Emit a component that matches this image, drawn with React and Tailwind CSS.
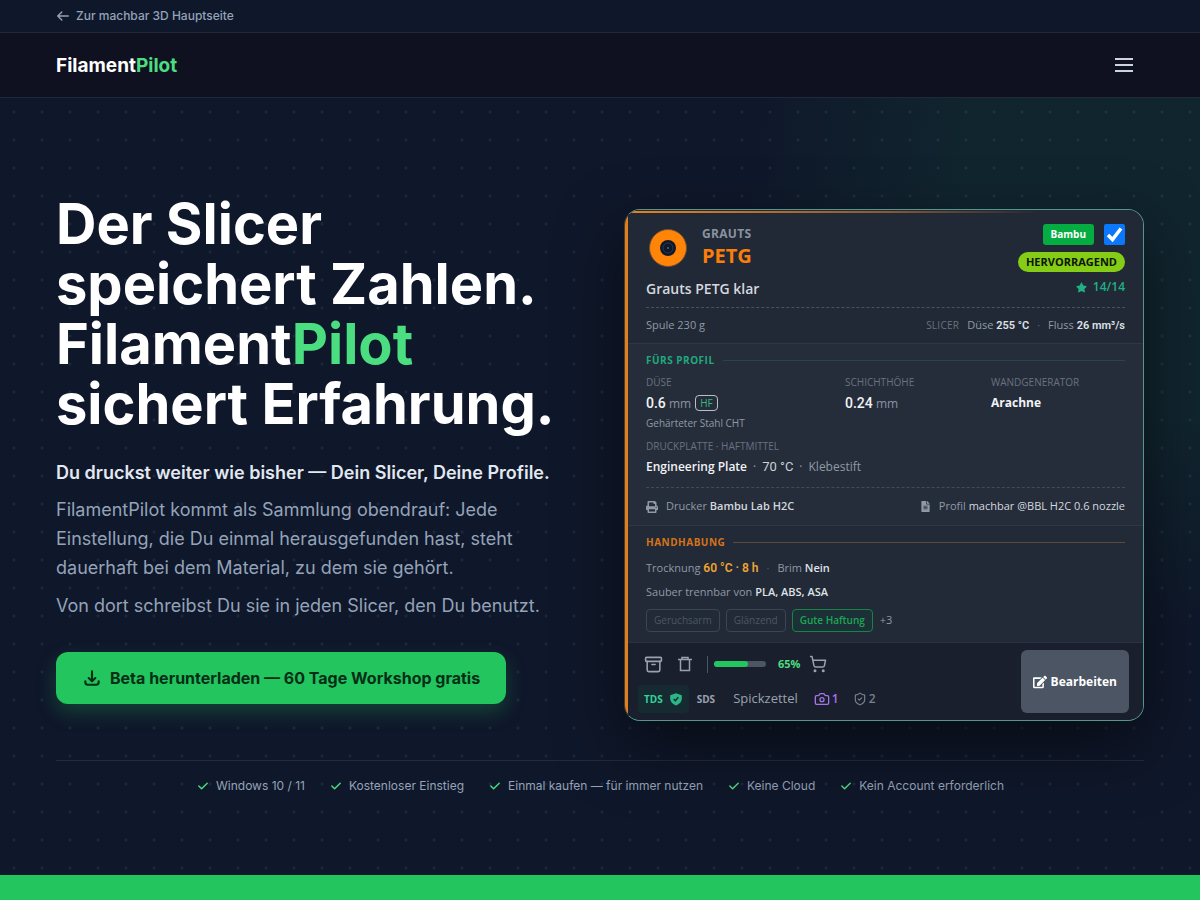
import React from "react";
import { Archive, Camera, ShieldCheck, ShoppingCart } from "lucide-react";
import { FaEdit, FaFileAlt, FaPrint, FaStar } from "react-icons/fa";
import { HiCheck, HiOutlineArrowLeft, HiOutlineDownload } from "react-icons/hi";

const labelClass = "text-[10px] leading-4 text-[#69727f]";
const tagClass = "h-[23px] px-[7px] flex items-center rounded border text-[10px]";
const numberClass = "font-['Roboto','Liberation_Sans',sans-serif]";

const trustItems = [
  "Windows 10 / 11",
  "Kostenloser Einstieg",
  "Einmal kaufen — für immer nutzen",
  "Keine Cloud",
  "Kein Account erforderlich",
];

const TopBar = () => (
  <div className="border-b border-[#232838] bg-[#0f172a]">
    <div className="mx-auto max-w-6xl px-8 h-8 flex items-center">
      <a
        href="#"
        className="flex items-center gap-1.5 text-[12px] leading-4 font-medium text-[#94a3b8]"
      >
        <HiOutlineArrowLeft className="size-3.5" strokeWidth={2.5} />
        Zur machbar 3D Hauptseite
      </a>
    </div>
  </div>
);

const Header = () => (
  <header className="border-b border-[#1e293b] bg-[#0f1120]">
    <div className="mx-auto max-w-6xl px-8 h-16 flex items-center justify-between">
      <a href="#" className="pt-0.5 text-[19px] leading-7 font-bold text-white">
        Filament<span className="text-[#4ade80]">Pilot</span>
      </a>
      <button
        type="button"
        aria-label="Menü"
        className="size-10 flex flex-col items-center justify-center gap-1"
      >
        <span className="h-0.5 w-[18px] bg-[#cbd5e1]" />
        <span className="h-0.5 w-[18px] bg-[#cbd5e1]" />
        <span className="h-0.5 w-[18px] bg-[#cbd5e1]" />
      </button>
    </div>
  </header>
);

const Spool = () => (
  <svg viewBox="0 0 40 40" className="size-10" aria-hidden="true">
    <circle cx="20" cy="20" r="18.5" fill="#ff8408" stroke="#6b5138" />
    <circle cx="20" cy="20" r="8" fill="#101828" />
    <circle cx="20" cy="20" r="5" fill="none" stroke="#1e3a5f" />
    <circle cx="20" cy="20" r="1" fill="#3f6a8f" />
  </svg>
);

const TrashIcon = () => (
  <svg
    viewBox="0 0 16 16"
    className="size-4"
    fill="none"
    stroke="currentColor"
    strokeWidth="1.5"
  >
    <path d="M1 3.5h14M5 3.5V1.5h6v2M3.5 3.5v11h9v-11" />
  </svg>
);

const SectionTitle = ({ children, textClass, lineClass }) => (
  <div className="flex items-center gap-2">
    <h3 className={`text-[10px] leading-4 font-bold tracking-wider ${textClass}`}>
      {children}
    </h3>
    <span className={`h-px flex-1 ${lineClass}`} />
  </div>
);

const CardHeader = () => (
  <div className="bg-[#212936] px-[18px] pt-3.5">
    <div className="flex justify-between">
      <div>
        <div className="flex items-end gap-3.5 pl-0.5">
          <Spool />
          <div>
            <p className="text-[12px] leading-5 font-bold tracking-wide text-[#8a93a1]">
              GRAUTS
            </p>
            <p className="text-[20px] leading-6 font-bold text-[#fb7d0a]">PETG</p>
          </div>
        </div>
        <h2 className="mt-[11px] text-[14px] leading-5 font-semibold text-[#d4d8de]">
          Grauts PETG klar
        </h2>
      </div>
      <div className="flex flex-col items-end">
        <div className="flex items-center gap-2.5">
          <span className="h-[21px] px-2 flex items-center rounded-[3px] bg-[#05ac42] text-[10px] font-bold text-white">
            Bambu
          </span>
          <label className="relative size-[21px]">
            <input
              type="checkbox"
              defaultChecked
              aria-label="Grauts PETG klar auswählen"
              className="block size-[21px] appearance-none rounded-[2px] bg-[#0b78fb]"
            />
            <svg
              viewBox="0 0 21 21"
              className="absolute inset-0 size-[21px] pointer-events-none"
              fill="none"
              stroke="#fff"
              strokeWidth="3.5"
            >
              <path d="M4 11l4.5 4.5L17 4.5" />
            </svg>
          </label>
        </div>
        <span className="mt-[7px] h-5 px-2 flex items-center rounded-full bg-[#84cc16] text-[11px] font-bold text-[#0d1505]">
          HERVORRAGEND
        </span>
        <span className="mt-[7px] flex items-center gap-1.5 text-[12px] leading-4 font-semibold text-[#1fb183]">
          <FaStar className="size-[11px]" />
          14/14
        </span>
      </div>
    </div>
    <div className="mt-2 h-9 border-t border-dashed border-[#4a5260] flex items-center justify-between text-[11px] text-[#9099a6]">
      <span>Spule 230 g</span>
      <span className="flex items-center">
        <span className="mr-2 text-[10px] tracking-wide text-[#69727f]">SLICER</span>
        <span>
          Düse{" "}
          <b className={`font-semibold text-[#dfe2e7] ${numberClass}`}>255 °C</b>
        </span>
        <span className="mx-2 text-[#5b6472]">·</span>
        <span>
          Fluss{" "}
          <b className={`font-semibold text-[#dfe2e7] ${numberClass}`}>26 mm³/s</b>
        </span>
      </span>
    </div>
  </div>
);

const CardProfile = () => (
  <div className="border-t border-[#2f3745] bg-[#252d3b] px-[18px] pt-2">
    <SectionTitle textClass="text-[#1fa97c]" lineClass="bg-[#28444c]">
      FÜRS PROFIL
    </SectionTitle>
    <dl className="mt-1.5 grid grid-cols-[199fr_146fr_134fr]">
      <div>
        <dt className={labelClass}>DÜSE</dt>
        <dd className="mt-[3px] h-5 flex items-center gap-1 text-[12px] leading-5 text-[#8a93a1]">
          <span>
            <b className={`font-medium text-[14px] text-[#f1f3f5] ${numberClass}`}>
              0.6
            </b>{" "}
            mm
          </span>
          <span className="h-4 px-1 flex items-center rounded border border-[#b9bfc8] text-[10px] text-[#35b77c]">
            HF
          </span>
        </dd>
        <dd className="text-[10px] leading-5 text-[#9099a6]">Gehärteter Stahl CHT</dd>
      </div>
      <div>
        <dt className={labelClass}>SCHICHTHÖHE</dt>
        <dd className="mt-[3px] h-5 text-[12px] leading-5 text-[#8a93a1]">
          <b className={`font-medium text-[14px] text-[#f1f3f5] ${numberClass}`}>
            0.24
          </b>{" "}
          mm
        </dd>
      </div>
      <div>
        <dt className={labelClass}>WANDGENERATOR</dt>
        <dd className="mt-[3px] h-5 text-[12px] leading-5 font-bold text-[#f1f3f5]">
          Arachne
        </dd>
      </div>
    </dl>
    <p className={`mt-[5px] ${labelClass}`}>DRUCKPLATTE · HAFTMITTEL</p>
    <p className="mt-[3px] flex gap-1.5 text-[12px] leading-5 text-[#9099a6]">
      <b className="font-semibold text-[#f1f3f5]">Engineering Plate</b>
      <span>·</span>
      <span className={`text-[13px] text-[#cdd1d8] ${numberClass}`}>70 °C</span>
      <span>·</span>
      <span>Klebestift</span>
    </p>
    <div className="mt-2.5 h-[38px] border-t border-dashed border-[#434b59] flex items-center justify-between text-[11px] text-[#9099a6]">
      <span className="flex items-center gap-2">
        <FaPrint className="size-3" />
        <span>
          Drucker <b className="font-semibold text-[#d4d8de]">Bambu Lab H2C</b>
        </span>
      </span>
      <span className="flex items-center gap-2">
        <FaFileAlt className="size-[11px]" />
        <span>
          Profil{" "}
          <b className="font-medium text-[#d4d8de]">machbar @BBL H2C 0.6 nozzle</b>
        </span>
      </span>
    </div>
  </div>
);

const CardHandling = () => (
  <div className="border-t border-[#2f3745] bg-[#212a36] px-[18px] pt-2 pb-2.5">
    <SectionTitle textClass="text-[#d5731a]" lineClass="bg-[#5a4a40]">
      HANDHABUNG
    </SectionTitle>
    <p className="mt-2 h-5 text-[11px] leading-5 text-[#9099a6]">
      Trocknung{" "}
      <b className={`font-semibold text-[12px] text-[#f0a431] ${numberClass}`}>
        60 °C · 8 h
      </b>
      <span className="mx-2 text-[#4f5866]">·</span>
      Brim <b className="font-semibold text-[#dfe2e7]">Nein</b>
    </p>
    <p className="mt-1 text-[11px] leading-5 text-[#9099a6]">
      Sauber trennbar von{" "}
      <b className="font-semibold text-[#dfe2e7]">PLA, ABS, ASA</b>
    </p>
    <div className="mt-[7px] flex items-center gap-1.5 text-[#4d5664]">
      <span className={`${tagClass} border-[#3c4553]`}>Geruchsarm</span>
      <span className={`${tagClass} border-[#3c4553]`}>Glänzend</span>
      <span
        className={`${tagClass} border-[#178344] bg-[#1c3037] font-semibold text-[#1fa653]`}
      >
        Gute Haftung
      </span>
      <span className="ml-px text-[11px] text-[#9099a6]">+3</span>
    </div>
  </div>
);

const CardFooter = () => (
  <div className="border-t border-[#2a3241] bg-[#191f2d] pl-2.5 pr-3.5 py-[7px] flex justify-between">
    <div className="flex flex-col justify-between">
      <div className="h-7 pl-1.5 flex items-center text-[#9aa2ae]">
        <button type="button" aria-label="Archivieren">
          <Archive className="size-[19px]" strokeWidth={2} />
        </button>
        <button type="button" aria-label="Löschen" className="ml-3.5">
          <TrashIcon />
        </button>
        <span className="ml-3.5 h-[17px] w-px bg-[#4b5563]" />
        <div className="ml-1.5 h-1.5 w-[52px] rounded-full bg-[#4b5563]">
          <div className="h-1.5 rounded-full bg-[#22c55e]" style={{ width: "65%" }} />
        </div>
        <span className="ml-3 text-[11px] font-bold text-[#4ade80]">65%</span>
        <button type="button" aria-label="Nachkaufen" className="ml-2">
          <ShoppingCart className="size-[18px]" strokeWidth={2} />
        </button>
      </div>
      <div className="h-7 flex items-center text-[#9aa2ae]">
        <a
          href="#"
          className="h-7 px-1.5 flex items-center gap-1.5 rounded bg-[#152a31] text-[10px] font-bold text-[#34d399]"
        >
          TDS
          <svg viewBox="0 0 24 24" className="size-3.5" aria-hidden="true">
            <path
              d="M12 2l10 3.5v6c0 5-4 9-10 11.5-6-2.5-10-6.5-10-11.5v-6z"
              fill="#2cb585"
            />
            <path d="M8 12l3 3 5-6" fill="none" stroke="#152a31" strokeWidth="2.5" />
          </svg>
        </a>
        <a href="#" className="ml-2 text-[10px] font-bold">
          SDS
        </a>
        <a href="#" className="ml-[18px] text-[13px]">
          Spickzettel
        </a>
        <span className="ml-4 flex items-center gap-0.5 text-[12px] font-semibold text-[#a673e8]">
          <Camera className="size-4" strokeWidth={2} />1
        </span>
        <span className="ml-3.5 flex items-center gap-0.5 text-[12px] font-semibold text-[#77808e]">
          <ShieldCheck className="size-3.5" strokeWidth={2} />2
        </span>
      </div>
    </div>
    <button
      type="button"
      className="h-[63px] px-3 flex items-center gap-1 rounded-md bg-[#4b5563] text-[12px] font-bold text-white"
    >
      <FaEdit className="size-3.5" />
      Bearbeiten
    </button>
  </div>
);

const MaterialCard = () => (
  <article className="relative overflow-hidden rounded-2xl border border-[#55988b] border-l-[#3a3f45] font-['Open_Sans','Noto_Sans',sans-serif] shadow-[0_24px_64px_rgba(0,0,0,0.5)]">
    <div className="absolute inset-x-0 top-px h-0.5 bg-linear-to-r from-[#e8821a] via-[#8a5a35] via-50% to-transparent to-80%" />
    <div className="border-l-[3px] border-[#e67e17]">
      <CardHeader />
      <CardProfile />
      <CardHandling />
      <CardFooter />
    </div>
  </article>
);

const Hero = () => (
  <section className="bg-[#0f172a] bg-[radial-gradient(circle_at_center,rgba(148,163,184,0.11)_1px,transparent_2px),radial-gradient(circle_at_100%_10%,rgba(34,197,94,0.08)_0,rgba(34,197,94,0.08)_240px,transparent_460px)] bg-size-[28px_28px,100%_100%]">
    <div className="mx-auto max-w-6xl px-8 pt-24 pb-20">
      <div className="grid grid-cols-2 items-center gap-12">
        <div className="pb-8">
          <h1 className="text-[56px] leading-[60px] font-bold text-white">
            Der Slicer
            <br />
            speichert Zahlen.
            <br />
            Filament<span className="text-[#4ade80]">Pilot</span>
            <br />
            sichert Erfahrung.
          </h1>
          <div className="mt-6 text-[18px] leading-[29px] text-[#94a3b8]">
            <p className="font-semibold text-[#e2e8f0]">
              Du druckst weiter wie bisher — Dein Slicer, Deine Profile.
            </p>
            <p className="mt-2">
              FilamentPilot kommt als Sammlung obendrauf: Jede Einstellung, die Du
              einmal herausgefunden hast, steht dauerhaft bei dem Material, zu dem
              sie gehört.
            </p>
            <p className="mt-[9px]">
              Von dort schreibst Du sie in jeden Slicer, den Du benutzt.
            </p>
          </div>
          <a
            href="#"
            className="mt-8 h-[52px] w-fit px-[26px] flex items-center gap-2 rounded-xl bg-[#22c55e] text-[16px] font-bold text-[#052e16] shadow-[0_8px_20px_rgba(34,197,94,0.25)]"
          >
            <HiOutlineDownload className="size-5" strokeWidth={2.5} />
            Beta herunterladen — 60 Tage Workshop gratis
          </a>
        </div>
        <MaterialCard />
      </div>
      <ul className="mt-6 pt-4 border-t border-[#232b3c] flex flex-wrap justify-center gap-6 text-[12px] leading-[18px] text-[#94a3b8]">
        {trustItems.map((item) => (
          <li key={item} className="flex items-center gap-1.5">
            <HiCheck className="size-3.5 text-[#4ade80]" />
            {item}
          </li>
        ))}
      </ul>
    </div>
  </section>
);

const App = () => (
  <div className="font-['Inter','Liberation_Sans',sans-serif]">
    <TopBar />
    <Header />
    <main>
      <Hero />
      <div className="h-[25px] bg-[#22c55e]" />
    </main>
  </div>
);

export default App;
